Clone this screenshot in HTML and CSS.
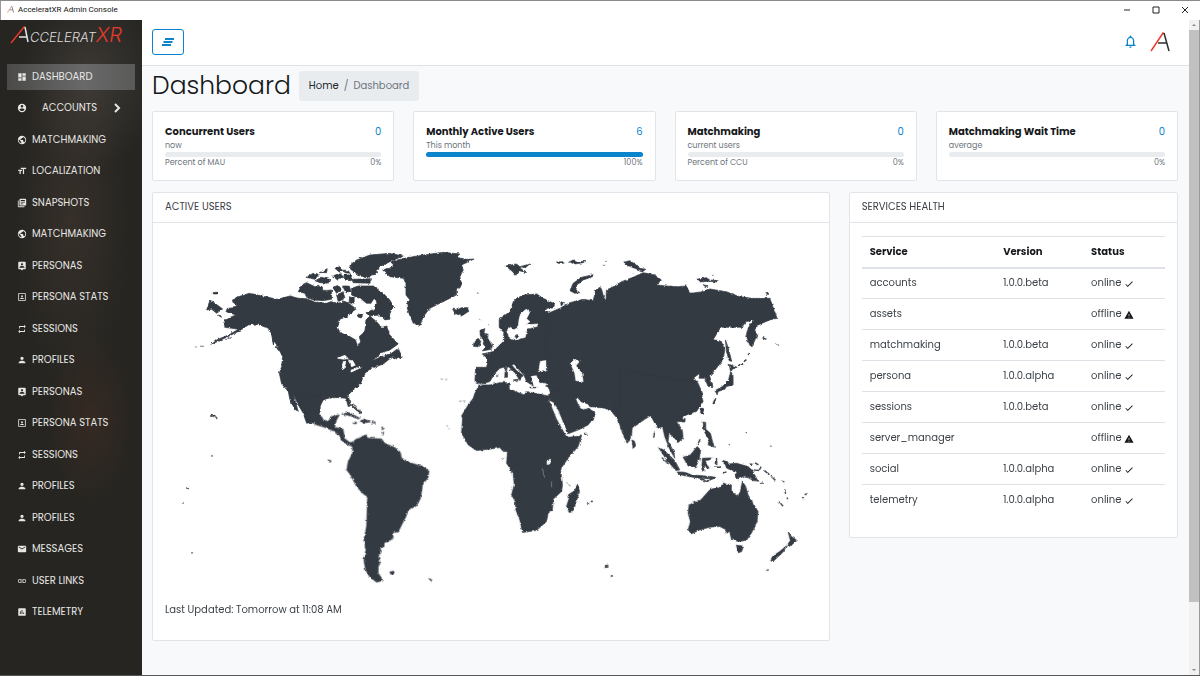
FILE: index.html
```
<!DOCTYPE html>
<html lang="en">
<head>
<meta charset="utf-8">
<title>AcceleratXR Admin Console</title>
<link rel="stylesheet" href="styles.css">
</head>
<body>
<svg class="sprite" aria-hidden="true">
  <symbol id="i-dash" viewBox="0 0 24 24"><path d="M3 13h8V3H3zm0 8h8v-6H3zm10 0h8V11h-8zm0-18v6h8V3z"/></symbol>
  <symbol id="i-account" viewBox="0 0 24 24"><path d="M12 2a10 10 0 1 0 0 20 10 10 0 0 0 0-20zm0 3a3 3 0 1 1 0 6 3 3 0 0 1 0-6zm0 14.2a7.2 7.2 0 0 1-6-3.200c0-2 4-3.100 6-3.100s6 1.100 6 3.100a7.200 7.200 0 0 1-6 3.200z"/></symbol>
  <symbol id="i-globe" viewBox="0 0 24 24"><path d="M12 2a10 10 0 1 0 0 20 10 10 0 0 0 0-20zm-1 17.930A8 8 0 0 1 4.210 10.210L9 15v1a2 2 0 0 0 2 2zm6.900-2.540A2 2 0 0 0 16 16h-1v-3a1 1 0 0 0-1-1H8v-2h2a1 1 0 0 0 1-1V7h2a2 2 0 0 0 2-2v-.410a8 8 0 0 1 2.900 12.800z"/></symbol>
  <symbol id="i-text" viewBox="0 0 24 24"><path d="M9 4v3h5v12h3V7h5V4zm-6 8h3v7h3v-7h3V9H3z"/></symbol>
  <symbol id="i-library" viewBox="0 0 24 24"><path d="M4 6H2v14a2 2 0 0 0 2 2h14v-2H4zm16-4H8a2 2 0 0 0-2 2v12a2 2 0 0 0 2 2h12a2 2 0 0 0 2-2V4a2 2 0 0 0-2-2zm-1 9H9V9h10zm-4 4H9v-2h6zm4-8H9V5h10z"/></symbol>
  <symbol id="i-persona" viewBox="0 0 24 24"><path d="M19 2H5a2 2 0 0 0-2 2v14a2 2 0 0 0 2 2h4l3 3 3-3h4a2 2 0 0 0 2-2V4a2 2 0 0 0-2-2zm-7 3.300a2.700 2.700 0 1 1 0 5.400 2.700 2.700 0 0 1 0-5.400zM18 16H6v-.900c0-2 4-3.100 6-3.100s6 1.100 6 3.100z"/></symbol>
  <symbol id="i-portrait" viewBox="0 0 24 24"><path d="M12 12.250a2.250 2.250 0 1 0 0-4.500 2.250 2.250 0 0 0 0 4.500zM16.500 16.250c0-1.500-3-2.250-4.500-2.250s-4.500.750-4.500 2.250V17h9zM21 3H3v18h18zm-2 16H5V5h14z"/></symbol>
  <symbol id="i-repeat" viewBox="0 0 24 24"><path d="M7 7h10v3l4-4-4-4v3H5v6h2zm10 10H7v-3l-4 4 4 4v-3h12v-6h-2z"/></symbol>
  <symbol id="i-person" viewBox="0 0 24 24"><path d="M12 12a4 4 0 1 0 0-8 4 4 0 0 0 0 8zm0 2c-2.670 0-8 1.340-8 4v2h16v-2c0-2.660-5.330-4-8-4z"/></symbol>
  <symbol id="i-mail" viewBox="0 0 24 24"><path d="M20 4H4a2 2 0 0 0-2 2v12a2 2 0 0 0 2 2h16a2 2 0 0 0 2-2V6a2 2 0 0 0-2-2zm0 4-8 5-8-5V6l8 5 8-5z"/></symbol>
  <symbol id="i-link" viewBox="0 0 24 24"><path d="M3.900 12A3.100 3.100 0 0 1 7 8.900h4V7H7a5 5 0 0 0 0 10h4v-1.900H7A3.100 3.100 0 0 1 3.900 12zM8 13h8v-2H8zm9-6h-4v1.900h4a3.100 3.100 0 0 1 0 6.200h-4V17h4a5 5 0 0 0 0-10z"/></symbol>
  <symbol id="i-chart" viewBox="0 0 24 24"><path d="M19 3H5a2 2 0 0 0-2 2v14a2 2 0 0 0 2 2h14a2 2 0 0 0 2-2V5a2 2 0 0 0-2-2zM9 17H7v-7h2zm4 0h-2V7h2zm4 0h-2v-4h2z"/></symbol>
  <symbol id="i-check" viewBox="0 0 24 24"><path d="M9 16.170 4.830 12l-1.420 1.410L9 19 21 7l-1.410-1.410z"/></symbol>
  <symbol id="i-warn" viewBox="0 0 24 24"><path d="M1 21h22L12 2zm12-3h-2v-2h2zm0-4h-2v-4h2z"/></symbol>
  <symbol id="i-mark" viewBox="0 0 20 20"><path class="mark-red" d="M1 19 13 1l1 1"/><path class="mark-ink" d="m14 1 5 18M8 11h9"/></symbol>
</svg>

<header class="titlebar">
  <svg class="titlebar-icon"><use href="#i-mark"/></svg>
  <span class="titlebar-text">AcceleratXR Admin Console</span>
  <button class="win-btn" aria-label="Minimize"><svg viewBox="0 0 8 8"><path d="M1 4h6"/></svg></button>
  <button class="win-btn" aria-label="Maximize"><svg viewBox="0 0 8 8"><path d="M1 1h6v6H1z"/></svg></button>
  <button class="win-btn" aria-label="Close"><svg viewBox="0 0 8 8"><path d="m1 1 6 6M7 1 1 7"/></svg></button>
</header>

<div class="window">
  <aside class="sidebar">
    <a class="brand" href="#" aria-label="AcceleratXR">
      <svg viewBox="0 0 20 18"><path class="mark-red" d="M1 17 14 1h1"/><path class="mark-light" d="m15 1 3 15M9 11h8"/></svg>
      <span class="brand-name">CCELERAT</span><span class="brand-xr">XR</span>
    </a>
    <nav class="nav">
      <a class="nav-link active" href="#"><svg><use href="#i-dash"/></svg>DASHBOARD</a>
      <a class="nav-link parent" href="#"><svg><use href="#i-account"/></svg><span>ACCOUNTS</span><svg class="chevron" viewBox="0 0 10 10"><path d="m3 1 4 4-4 4"/></svg></a>
      <a class="nav-link" href="#"><svg><use href="#i-globe"/></svg>MATCHMAKING</a>
      <a class="nav-link" href="#"><svg><use href="#i-text"/></svg>LOCALIZATION</a>
      <a class="nav-link" href="#"><svg><use href="#i-library"/></svg>SNAPSHOTS</a>
      <a class="nav-link" href="#"><svg><use href="#i-globe"/></svg>MATCHMAKING</a>
      <a class="nav-link" href="#"><svg><use href="#i-persona"/></svg>PERSONAS</a>
      <a class="nav-link" href="#"><svg><use href="#i-portrait"/></svg>PERSONA STATS</a>
      <a class="nav-link" href="#"><svg><use href="#i-repeat"/></svg>SESSIONS</a>
      <a class="nav-link" href="#"><svg><use href="#i-person"/></svg>PROFILES</a>
      <a class="nav-link" href="#"><svg><use href="#i-persona"/></svg>PERSONAS</a>
      <a class="nav-link" href="#"><svg><use href="#i-portrait"/></svg>PERSONA STATS</a>
      <a class="nav-link" href="#"><svg><use href="#i-repeat"/></svg>SESSIONS</a>
      <a class="nav-link" href="#"><svg><use href="#i-person"/></svg>PROFILES</a>
      <a class="nav-link" href="#"><svg><use href="#i-person"/></svg>PROFILES</a>
      <a class="nav-link" href="#"><svg><use href="#i-mail"/></svg>MESSAGES</a>
      <a class="nav-link" href="#"><svg><use href="#i-link"/></svg>USER LINKS</a>
      <a class="nav-link" href="#"><svg><use href="#i-chart"/></svg>TELEMETRY</a>
    </nav>
  </aside>

  <main class="page">
    <div class="topbar">
      <button class="menu-btn" aria-label="Toggle sidebar"><svg viewBox="0 0 12 8"><path d="M3 1h9M1.500 4h9M0 7h9"/></svg></button>
      <button class="icon-btn" aria-label="Notifications"><svg class="bell" viewBox="0 0 24 24"><path d="M12 22a2 2 0 0 0 2-2h-4c0 1.100.900 2 2 2zm6-6v-5c0-3.070-1.630-5.640-4.500-6.320V4a1.500 1.500 0 0 0-3 0v.680C7.640 5.360 6 7.920 6 11v5l-2 2v1h16v-1zm-2 1H8v-6c0-2.480 1.510-4.500 4-4.500s4 2.020 4 4.500z"/></svg></button>
      <button class="icon-btn" aria-label="Account"><svg class="avatar"><use href="#i-mark"/></svg></button>
    </div>

    <div class="content">
      <div class="heading">
        <h1>Dashboard</h1>
        <nav class="breadcrumb" aria-label="Breadcrumb"><a href="#">Home</a><span>/</span><span>Dashboard</span></nav>
      </div>

      <div class="grid">
        <section class="card stat">
          <div class="row"><h2>Concurrent Users</h2><span class="value">0</span></div>
          <p>now</p>
          <div class="bar"></div>
          <div class="row"><span>Percent of MAU</span><span>0%</span></div>
        </section>
        <section class="card stat">
          <div class="row"><h2>Monthly Active Users</h2><span class="value">6</span></div>
          <p>This month</p>
          <div class="bar"><div class="fill" style="width:100%"></div></div>
          <div class="row"><span></span><span>100%</span></div>
        </section>
        <section class="card stat">
          <div class="row"><h2>Matchmaking</h2><span class="value">0</span></div>
          <p>current users</p>
          <div class="bar"></div>
          <div class="row"><span>Percent of CCU</span><span>0%</span></div>
        </section>
        <section class="card stat">
          <div class="row"><h2>Matchmaking Wait Time</h2><span class="value">0</span></div>
          <p>average</p>
          <div class="bar"></div>
          <div class="row"><span></span><span>0%</span></div>
        </section>

        <section class="card map-card">
          <h3 class="card-header">ACTIVE USERS</h3>
          <div class="card-body">
            <svg class="map" viewBox="165 236 652 358" role="img" aria-label="World map">
              <defs>
                <filter id="coast" x="165" y="236" width="652" height="358" filterUnits="userSpaceOnUse" color-interpolation-filters="sRGB">
                  <feTurbulence type="fractalNoise" baseFrequency=".3" numOctaves="2" seed="4"/>
                  <feDisplacementMap in="SourceGraphic" scale="3" xChannelSelector="R" yChannelSelector="G"/>
                </filter>
              </defs>
              <g filter="url(#coast)">
                <!-- North America -->
                <g transform="translate(190 240) scale(.33333)">
                  <path d="M104 262 105 240 125 230 138 225 108 215 112 205 135 203 140 195 124 183 140 172 178 160 195 163 215 168 235 172 262 178 285 172 300 168 325 175 350 176 375 186 410 190 428 183 440 190 470 185 490 200 500 208 480 222 475 228 450 238 443 262 450 278 480 290 497 300 503 322 512 305 508 290 525 275 528 240 540 228 560 245 575 262 590 258 600 285 625 312 600 330 575 338 548 362 575 350 605 340 625 325 637 352 620 357 608 350 580 372 560 380 545 385 530 395 518 415 512 432 490 450 475 465 482 498 475 500 468 475 440 473 415 475 400 480 390 500 388 545 350 550 340 520 325 495 310 462 325 515 315 508 300 480 295 455 275 432 268 400 275 380 278 350 262 320 248 300 245 285 235 265 200 252 175 255 150 272 110 292 65 313 80 300 120 283 145 268 125 265z"/>
                  <path d="M60 180 75 190 98 207 80 220 65 208 50 210zM70 157h12v5H70zM85 225l10 3-4 3zM15 321h8M30 319h12M105 300l20-8"/>
                  <path d="M480 75 500 60 540 45 600 40 640 48 600 65 570 80 560 98 540 112 510 108 482 88zM325 155 335 135 350 128 375 140 395 138 400 152 425 150 425 178 400 182 370 180 350 172 345 160zM348 112 370 100 385 106 375 118zM388 98 412 86 410 98zM375 122 395 112 420 118 415 130 390 128zM428 108 450 100 462 112 440 118zM462 105 485 105 482 122 465 120zM485 118 545 116 540 130 490 128zM428 142 445 136 455 148 440 160zM435 85l15-5 8 12-10 4zM460 90l15 2 5 8-15-2zM458 138l20 0 5 15-15 5zM440 165l20-10 5 20-20 10z"/>
                  <path d="M485 145 505 138 550 138 580 160 600 180 612 202 600 212 600 238 585 240 570 225 540 228 528 218 555 208 550 190 530 190 515 178 500 172 485 165zM478 170l15 5 0 18-15-5zM505 222l14 4-5 8-10-3z"/>
                  <path class="sea" d="M443 355 465 346 475 356 462 358zM460 365 467 365 462 390 456 388zM474 360 488 362 496 376 486 380zM480 392 500 385 512 378 510 384 485 396zM545 190l8-12 6 12-10 14zM508 175l6 3-8 30-8 0z"/>
                  <path class="thin" d="m248 295 3 20m8 5 8 12m15 0 4 15M485 495l15 15 15 10M60 523l15 5 8 10"/>
                </g>
                <!-- Central and South America -->
                <g transform="translate(300 370) scale(.33333)">
                  <path d="M0 70 60 80 60 130 70 150 85 155 95 140 118 135 110 150 105 165 105 172 130 178 133 205 150 218 160 215 170 235 145 225 125 212 118 195 100 183 75 172 50 165 18 148 15 130 0 108z"/>
                  <path d="M158 222 165 210 185 200 200 195 205 205 245 207 255 220 285 233 300 245 305 265 335 280 370 290 387 303 385 322 368 345 362 385 350 408 325 420 318 440 295 485 278 490 280 505 265 515 253 518 252 530 240 535 245 545 235 560 242 578 235 590 235 610 250 632 230 637 210 622 197 600 192 570 198 540 192 510 200 470 203 380 190 372 170 350 152 315 140 300 145 275 158 250z"/>
                  <path d="M125 132 148 128 180 145 175 147 145 136zM182 152 195 148 212 156 200 158 182 157zM160 157h10v4H160zM217 156h9v3h-9zM270 606l14-2-4 8-8 1zM386 626l10 4-2 4zM84 270l10 3-4 5zM424 27h5M436 29h5M478 94h6M490 95h6M440 168h4M445 177h4"/>
                  <path class="thin" d="m162 102 8 12m5 5 8 12M246 170l4 10m1 6-3 10"/>
                </g>
                <!-- Greenland, Iceland, Britain, Europe -->
                <g transform="translate(360 240) scale(.33333)">
                  <path d="M68 90 100 80 95 65 130 55 190 45 250 37 300 42 290 52 320 58 343 57 305 75 310 90 300 110 305 135 290 150 290 165 260 180 240 190 210 205 190 230 180 257 160 250 145 215 140 190 150 180 138 165 138 130 130 115 90 110zM278 207 290 210 305 203 322 203 327 214 305 228 285 220z"/>
                  <path d="M360 272 375 266 372 280 385 283 383 298 398 312 395 328 367 333 378 322 370 312 372 300 362 292zM355 295 363 305 358 320 341 320 343 304zM438 78 470 72 480 80 510 72 498 82 480 84 500 98 478 92 468 106 455 92z"/>
                  <path d="M365 432 345 425 347 382 380 382 385 358 367 342 400 335 415 320 430 305 432 278 418 262 418 238 450 215 462 180 490 165 530 162 550 175 585 192 580 205 560 205 570 220 600 210 640 190 680 182 680 500 575 500 572 465 575 430 540 428 530 405 512 408 520 438 500 425 492 405 462 372 456 376 470 392 490 406 480 422 465 398 440 380 420 385 405 400 390 425z"/>
                  <path class="sea" d="M440 272 452 262 462 270 475 262 478 235 484 220 500 207 511 213 500 236 510 245 496 255 534 252 530 260 502 266 496 292 465 300 448 294 446 285zM536 395 542 364 560 362 562 372 580 370 604 386 600 397 568 393zM570 205l15 8-12 10-15-12z"/>
                  <path d="M436 382h5v12h-5zM435 397h8v15h-8zM460 420l15-2-3 7zM510 442h18v2h-18zM557 438l10-3-2 6zM408 408l8-3M352 160h4M358 238h3M385 254h3M465 288l6-4 5 6-6 6z"/>
                </g>
                <!-- Asia -->
                <g transform="translate(540 240) scale(.33333)">
                  <path d="M20 222 60 205 90 188 130 178 160 182 168 150 183 140 192 172 198 182 200 150 225 138 245 125 280 112 310 98 345 105 365 120 350 135 380 138 415 140 440 138 450 160 490 155 510 147 560 155 600 170 640 175 690 175 705 215 712 235 690 240 655 255 645 270 652 285 635 325 618 290 625 265 640 240 620 245 605 262 545 262 525 295 545 305 555 330 550 360 530 385 510 410 520 440 505 440 495 415 478 415 480 400 460 415 475 425 470 430 485 465 490 485 470 515 430 528 425 545 345 550 335 525 310 525 300 545 240 545 215 515 195 505 150 500 140 495 120 490 105 475 130 510 165 520 160 545 55 545 30 485 35 465 20 430z"/>
                  <path class="sea" d="M92 370 105 358 118 365 108 378 125 395 130 425 108 422 105 400zM104 474 114 476 124 488 144 494 148 502 132 510 118 504zM523 298l22-36 12 42-15-4z"/>
                  <path d="M90 152 100 130 125 112 160 104 158 110 130 120 112 135 108 150 120 158 105 160zM50 66 72 65 72 70 55 70zM88 66 100 60 110 66 138 63 130 68 105 72zM252 66 270 62 290 75 300 85 318 88 310 94 285 85 262 76zM470 118 500 113 510 120 535 122 532 126 505 124 480 126zM490 134l15 4-8 2zM678 158h6v5h-6zM62 185l12 3-10 10zM190 76h6M516 106h5M280 102h5M196 64h5"/>
                  <path d="M557 300 566 325 576 365 568 362 560 335zM568 373 592 382 585 384 572 392zM573 392 580 410 580 435 560 440 555 448 535 455 532 465 526 452 548 440 566 422 570 405zM484 505l8 2-4 16-5-4z"/>
                  <path class="thin" d="m595 378 12-8m5-5 8-6m5-12 4-8m-5-100M668 293l12 5m28 12 10 6M528 475l-6 18"/>
                </g>
                <!-- Africa, Arabia, India -->
                <g transform="translate(440 370) scale(.33333)">
                  <path d="M118 45 150 45 180 38 208 38 208 58 235 68 255 75 260 65 300 73 325 78 330 95 350 140 385 202 425 198 415 230 385 265 362 298 368 345 365 365 340 388 338 420 325 430 320 455 290 482 248 488 240 450 228 420 226 395 215 375 223 345 220 310 200 280 203 245 190 245 180 233 155 237 110 242 85 225 65 190 68 145 65 138 85 105 100 85 105 70z"/>
                  <path d="M324 80 338 60 405 80 415 105 430 120 448 115 467 130 460 145 445 165 420 178 384 192 366 155 350 115zM525 100 535 135 540 165 550 195 562 220 575 205 577 175 615 148 645 130 640 90zM576 210 584 214 588 228 580 235zM413 343 419 365 400 425 388 428 380 410 388 385 385 375 405 362z"/>
                  <path class="sea" d="M330 94 340 98 352 116 368 155 384 192 380 198 352 148zM322 272 332 268 330 282 322 284z"/>
                  <path class="lake" d="m307 296 8 28m20 8v20"/>
                  <path d="M433 190h8v3h-8zM496 586h9v7h-9zM514 617h4v3h-4zM443 398h4v3h-4zM454 393h4v3h-4zM380 340l12 8M186 268h3M192 262h3"/>
                </g>
                <!-- South-east Asia and Oceania -->
                <g transform="translate(620 370) scale(.33333)">
                  <path d="M0 0 235 40 248 70 240 110 200 135 180 140 170 155 188 180 190 205 175 218 165 205 148 190 145 215 162 245 165 265 150 238 135 200 128 170 115 175 90 132 40 160 0 160z"/>
                  <path d="M185 148 196 145 195 156 186 156zM244 118 250 115 248 132 243 128zM116 233 132 240 165 272 180 300 168 302 142 272zM172 306 195 307 215 315 255 318 285 322 282 327 235 325 178 314zM190 262 212 255 232 230 243 240 238 270 226 294 205 288zM250 155 258 158 258 178 272 190 280 222 284 232 265 225 268 210 252 182zM248 265 275 264 270 270 256 272 268 295 262 296 255 285 252 304 246 298zM310 272 322 274 328 282 350 280 385 290 398 302 415 334 400 332 375 318 355 327 345 320 352 306 322 296z"/>
                  <path d="M208 405 245 388 270 360 290 352 300 355 310 340 335 345 335 362 355 378 362 365 368 335 378 350 385 375 400 400 415 425 412 455 395 490 380 512 355 515 335 508 330 485 318 490 320 480 300 470 270 472 240 480 215 492 205 480 212 455 205 430zM350 526 371 529 366 545 356 549zM505 485 515 500 530 510 520 522 508 530 503 525 512 512zM500 528 492 545 462 573 453 570 460 558 480 545zM441 600h4v3h-4z"/>
                  <path class="thin" d="M104 188l-2 15m24 60 20 20m95-75-8 18m57 38 1 20m-10 8 22 0m-18-14 8 0M262 335l18-10m-38 2 20 8M398 300l20 2 6-12m10 12 15 12m5 5 15 14M495 358l3 15m4 10 2 5M478 395l12 14m62-28-4 4m12-14-5 4M378 188h3M452 229h3M327 224h3M285 90l-5 12M310 310l10-4M424 340h5m60-5h5M390 283l8 0m8-4 10 6"/>
                </g>
                <path class="dots" d="M186 488l3 1M183 503h1M191 553h2M211 456h2M210 415l4 2"/>
              </g>
            </svg>
            <p class="updated">Last Updated: Tomorrow at 11:08 AM</p>
          </div>
        </section>

        <section class="card health-card">
          <h3 class="card-header">SERVICES HEALTH</h3>
          <div class="card-body">
            <table>
              <thead><tr><th>Service</th><th>Version</th><th>Status</th></tr></thead>
              <tbody>
                <tr><td>accounts</td><td>1.0.0.beta</td><td>online <svg><use href="#i-check"/></svg></td></tr>
                <tr><td>assets</td><td></td><td>offline <svg><use href="#i-warn"/></svg></td></tr>
                <tr><td>matchmaking</td><td>1.0.0.beta</td><td>online <svg><use href="#i-check"/></svg></td></tr>
                <tr><td>persona</td><td>1.0.0.alpha</td><td>online <svg><use href="#i-check"/></svg></td></tr>
                <tr><td>sessions</td><td>1.0.0.beta</td><td>online <svg><use href="#i-check"/></svg></td></tr>
                <tr><td>server_manager</td><td></td><td>offline <svg><use href="#i-warn"/></svg></td></tr>
                <tr><td>social</td><td>1.0.0.alpha</td><td>online <svg><use href="#i-check"/></svg></td></tr>
                <tr><td>telemetry</td><td>1.0.0.alpha</td><td>online <svg><use href="#i-check"/></svg></td></tr>
              </tbody>
            </table>
          </div>
        </section>
      </div>
    </div>
  </main>

  <div class="scrollbar" aria-hidden="true">
    <svg viewBox="0 0 10 10"><path d="m3 6 2-2 2 2z"/></svg>
    <div class="track"><div class="thumb"></div></div>
    <svg viewBox="0 0 10 10"><path d="m3 4 2 2 2-2z"/></svg>
  </div>
</div>
</body>
</html>
```
FILE: styles.css
```
* { box-sizing: border-box; }
body {
  margin: 0;
  height: 100vh;
  display: flex;
  flex-direction: column;
  overflow: hidden;
  border-top: 1px solid #8a8a8a;
  border-bottom: 1px solid #55575a;
  background: #fff;
  color: #3c4248;
  font: 400 10px/16px Poppins, Inter, sans-serif;
}
h1, h2, h3, p { margin: 0; font-weight: inherit; }
a { color: inherit; text-decoration: none; }
button { padding: 0; border: 0; background: none; display: flex; align-items: center; justify-content: center; }
.sprite { display: none; }
.mark-red, .mark-ink, .mark-light { fill: none; stroke-width: 1.5; }
.mark-red { stroke: #e8392c; }
.mark-ink { stroke: #2b2d31; }
.mark-light { stroke: #e4e4e4; }

/* Window title bar */
.titlebar { display: flex; align-items: center; height: 19px; padding: 0 1px 2px 6px; border-left: 1px solid #999; background: #fff; }
.titlebar-icon { width: 7px; height: 7px; margin-right: 4px; color: #c33; }
.titlebar-text { flex: 1; font: 400 8px/16px Roboto, "Noto Sans", sans-serif; color: #111; }
.win-btn { width: 29px; height: 17px; }
.win-btn svg { width: 8px; height: 8px; fill: none; stroke: #222; }

.window { flex: 1; display: flex; min-height: 0; }

/* Sidebar */
.sidebar {
  flex: none;
  width: 142px;
  padding: 4px 7px 8px;
  display: flex;
  flex-direction: column;
  background:
    radial-gradient(ellipse 45px 90px at 90px 400px, rgba(84, 50, 40, .35), transparent),
    radial-gradient(ellipse 60px 170px at 72px 200px, rgba(84, 66, 58, .35), transparent),
    radial-gradient(ellipse 70px 90px at 90px 60px, rgba(84, 78, 74, .5), transparent),
    #262521;
  color: #e6e6e4;
}
.brand { display: flex; align-items: flex-end; height: 20px; padding-left: 3px; margin-bottom: 17px; color: #dcdcdc; }
.brand svg { width: 20px; height: 18px; }
.brand-name { font: italic 300 13px/14px Inter, sans-serif; }
.brand-xr { font: italic 300 20px/18px Inter, sans-serif; color: #e8392c; }
.nav { flex: 1; max-height: 567px; display: grid; grid-auto-rows: 1fr; align-items: center; }
.nav-link { display: flex; align-items: center; gap: 5px; height: 26px; padding-left: 10px; }
.nav-link svg { width: 10px; height: 10px; fill: currentColor; }
.nav-link.active { background: linear-gradient(90deg, #4a4a49, #6a6969 60%, #5a5a59); }
.nav-link.parent { justify-content: space-between; padding-right: 13px; }
.nav-link .chevron { fill: none; stroke: currentColor; stroke-width: 2; }

/* Page */
.page { flex: 1; min-width: 0; background: #f8f9fb; overflow: hidden; }
.topbar { display: flex; align-items: center; height: 46px; padding: 0 19px 2px 10px; background: #fff; border-bottom: 1px solid #dee2e6; }
.menu-btn { width: 32px; height: 26px; margin-right: auto; border: 1px solid #0a84cb; border-radius: 3px; background: #fff; }
.menu-btn svg { width: 12px; height: 8px; fill: none; stroke: #0a84cb; stroke-width: 2; }
.icon-btn { margin-left: 12px; }
.bell { width: 15px; height: 15px; fill: #0a84cb; }
.avatar { width: 20px; height: 20px; }
.content { padding: 5px 11px 10px 10px; }
.heading { display: flex; align-items: center; gap: 8px; margin-bottom: 10px; }
.heading h1 { font-size: 25px; font-weight: 300; line-height: 30px; color: #16181b; }
.breadcrumb { display: flex; gap: 5px; padding: 7px 10px; border-radius: 3px; background: #e9ecef; color: #6c757d; }
.breadcrumb a { color: #212529; }
.grid { display: grid; grid-template-columns: repeat(12, 1fr); gap: 11px 19px; align-items: start; }
.card { border: 1px solid #e1e4e8; border-radius: 2px; background: #fff; }

.stat { grid-column: span 3; padding: 12px 12px 11px; font-size: 8px; line-height: 12px; color: #6c757d; }
.row { display: flex; justify-content: space-between; }
.stat h2 { font-size: 10px; line-height: 16px; font-weight: 700; color: #16181b; }
.stat .value { font-size: 10px; line-height: 16px; color: #0a84cb; }
.bar { height: 5px; border-radius: 3px; background: #e9ecef; }
.fill { height: 5px; border-radius: 3px; background: #0a84cb; }

.card-header { padding: 6px 12px 7px; border-bottom: 1px solid #e1e4e8; font-size: 10px; }
.card-body { padding: 13px 12px 12px; }
.map-card { grid-column: span 8; }
.map { display: block; width: 100%; fill: #343a42; }
.map path { stroke: #343a42; stroke-width: 2; stroke-linejoin: round; }
.map .sea { fill: #fff; stroke: #fff; }
.map .thin { fill: none; stroke-width: 4; }
.map .lake { fill: none; stroke: #9a9da1; }
.map .dots { stroke-width: 1; }
.updated { margin: 8px 0 10px; }

.health-card { grid-column: span 4; padding-bottom: 9px; }
table { width: 100%; border-collapse: collapse; }
th, td { height: 31px; padding: 0 8px; text-align: left; border-top: 1px solid #dee2e6; }
th { font-weight: 700; color: #16181b; border-bottom: 2px solid #dee2e6; }
th:first-child { width: 44%; }
th:nth-child(2) { width: 29%; }
td svg { width: 10px; height: 10px; vertical-align: -3px; fill: #16181b; }

/* Scroll bar */
.scrollbar { width: 11px; display: flex; flex-direction: column; background: #f1f1f1; border-right: 1px solid #999; }
.scrollbar svg { width: 10px; height: 10px; fill: #888; }
.track { flex: 1; }
.thumb { height: 90%; background: #c1c1c1; }
```
